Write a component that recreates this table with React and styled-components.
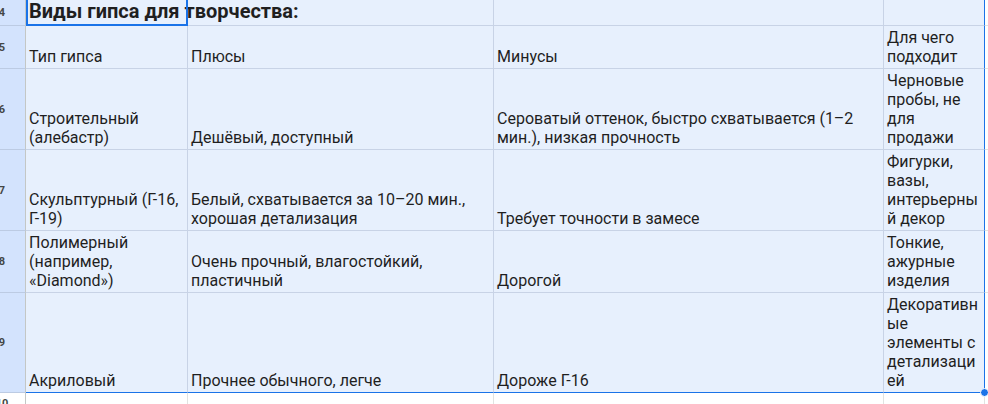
import React from 'react';
import styled, { createGlobalStyle } from 'styled-components';

const GlobalStyle = createGlobalStyle`
  html, body {
    margin: 0;
    padding: 0;
    background: #ffffff;
    overflow: hidden;
  }
`;

const Sheet = styled.div`
  display: grid;
  grid-template-columns: 26px 162px 306px 390px 101px 1fr;
  grid-template-rows: 26px 43px 81px 81px 62px 100px 21px;
  width: 988px;
  height: 404px;
  overflow: hidden;
  font-family: Roboto, "Liberation Sans", Arial, sans-serif;
  color: #1f1f1f;
`;

const RowHead = styled.div`
  box-sizing: border-box;
  display: flex;
  align-items: center;
  overflow: hidden;
  background: ${(p) => (p.$selected ? '#d3e3fd' : '#ffffff')};
  border-right: 1px solid #c4c7c5;
  border-bottom: 1px solid ${(p) => (p.$selected ? '#bccbe3' : '#e1e3e1')};
  font-size: 11px;
  font-weight: bold;
  color: #444746;
`;

const RowNum = styled.span`
  flex: none;
  width: 46px;
  margin-left: -21px;
  text-align: center;
`;

const Cell = styled.div`
  position: relative;
  box-sizing: border-box;
  display: flex;
  flex-direction: column;
  justify-content: flex-end;
  padding: 0 3px 2px 3px;
  font-size: 16px;
  line-height: 19px;
  white-space: pre-line;
  overflow-wrap: anywhere;
  background: ${(p) => (p.$blank ? '#ffffff' : '#e7f0fd')};
  border-right: 1px solid ${(p) => (p.$edge ? '#1a73e8' : p.$blank ? '#e1e3e1' : '#c8d3e6')};
  border-bottom: 1px solid ${(p) => (p.$last ? '#1a73e8' : p.$blank ? '#e1e3e1' : '#c8d3e6')};
  z-index: ${(p) => (p.$handle ? 2 : 0)};

  ${(p) =>
    p.$handle &&
    `
    &::after {
      content: '';
      position: absolute;
      right: -5px;
      bottom: -5px;
      width: 7px;
      height: 7px;
      border-radius: 50%;
      background: #1a73e8;
      border: 1px solid #ffffff;
    }
  `}
`;

const TitleCell = styled(Cell)`
  z-index: 1;
  overflow: visible;
  white-space: nowrap;
  font-size: 20px;
  line-height: 23px;
  font-weight: bold;
  border-right-color: transparent;

  &::after {
    content: '';
    position: absolute;
    left: 0;
    right: -1px;
    top: -4px;
    bottom: -1px;
    border: 2px solid #1a73e8;
    pointer-events: none;
  }
`;

const rows = [
  {
    n: 5,
    cells: ['Тип гипса', 'Плюсы', 'Минусы', 'Для чего подходит'],
  },
  {
    n: 6,
    cells: [
      'Строительный (алебастр)',
      'Дешёвый, доступный',
      'Сероватый оттенок, быстро схватывается (1–2 мин.), низкая прочность',
      'Черновые пробы, не для продажи',
    ],
  },
  {
    n: 7,
    cells: [
      'Скульптурный (Г-16, Г-19)',
      'Белый, схватывается за 10–20 мин., хорошая детализация',
      'Требует точности в замесе',
      'Фигурки, вазы, интерьерны\nй декор',
    ],
  },
  {
    n: 8,
    cells: [
      'Полимерный (например, «Diamond»)',
      'Очень прочный, влагостойкий, пластичный',
      'Дорогой',
      'Тонкие, ажурные изделия',
    ],
  },
  {
    n: 9,
    cells: [
      'Акриловый',
      'Прочнее обычного, легче',
      'Дороже Г-16',
      'Декоративные элементы с детализацией',
    ],
  },
];

export default function App() {
  return (
    <>
      <GlobalStyle />
      <Sheet>
        <RowHead $selected>
          <RowNum>4</RowNum>
        </RowHead>
        <TitleCell>Виды гипса для творчества:</TitleCell>
        <Cell />
        <Cell />
        <Cell $edge />
        <Cell $blank />

        {rows.map((row, ri) => {
          const last = ri === rows.length - 1;
          return (
            <React.Fragment key={row.n}>
              <RowHead $selected>
                <RowNum>{row.n}</RowNum>
              </RowHead>
              {row.cells.map((text, ci) => (
                <Cell
                  key={ci}
                  $edge={ci === 3}
                  $last={last}
                  $handle={last && ci === 3}
                >
                  {text}
                </Cell>
              ))}
              <Cell $blank />
            </React.Fragment>
          );
        })}

        <RowHead>
          <RowNum>10</RowNum>
        </RowHead>
        <Cell $blank />
        <Cell $blank />
        <Cell $blank />
        <Cell $blank />
        <Cell $blank />
      </Sheet>
    </>
  );
}
